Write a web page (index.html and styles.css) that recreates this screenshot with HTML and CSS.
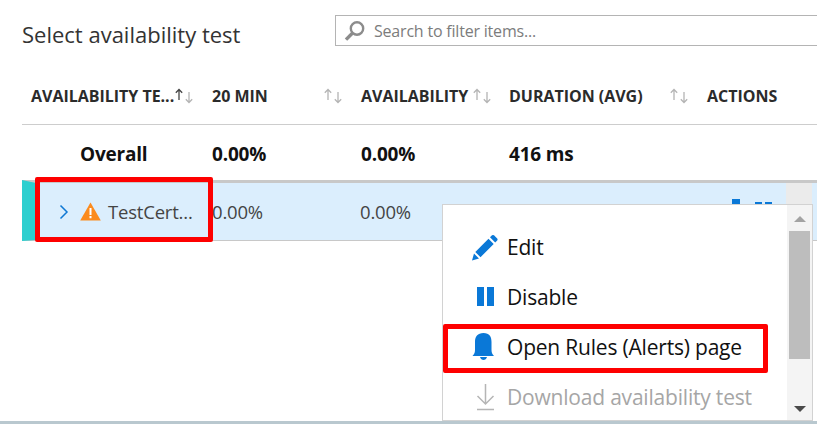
FILE: index.html
```html
<!DOCTYPE html>
<html lang="en">
<head>
<meta charset="utf-8">
<title>Select availability test</title>
<link rel="stylesheet" href="styles.css">
</head>
<body>
<main class="blade">
  <header class="top">
    <h1 class="title">Select availability test</h1>
    <div class="search">
      <svg class="search-icon" width="24" height="24" viewBox="0 0 24 24"><circle cx="14" cy="9.500" r="6.200" fill="none" stroke="#8c8c8c" stroke-width="2.400"/><path d="M9.600 14 3 20.600" stroke="#8c8c8c" stroke-width="3.400" fill="none"/></svg>
      <span>Search to filter items...</span>
    </div>
  </header>
  <div class="row head">
    <div class="cell first-h"><span class="h-text">AVAILABILITY TE...</span>
      <svg class="sort gap0" width="18" height="16" viewBox="0 0 18 16"><path d="M4 12V1.500M.8 4.700 4 1.500 7.200 4.700" fill="none" stroke="#444" stroke-width="1.300"/><path d="M14 4V14.500M10.800 11.300 14 14.500 17.200 11.300" fill="none" stroke="#b4b4b4" stroke-width="1.300"/></svg></div>
    <div class="cell"><span class="h-text">20 MIN</span>
      <svg class="sort gap1" width="18" height="16" viewBox="0 0 18 16"><path d="M4 12V1.500M.8 4.700 4 1.500 7.200 4.700" fill="none" stroke="#b4b4b4" stroke-width="1.300"/><path d="M14 4V14.500M10.800 11.300 14 14.500 17.200 11.300" fill="none" stroke="#b4b4b4" stroke-width="1.300"/></svg></div>
    <div class="cell"><span class="h-text">AVAILABILITY</span>
      <svg class="sort gap2" width="18" height="16" viewBox="0 0 18 16"><path d="M4 12V1.500M.8 4.700 4 1.500 7.200 4.700" fill="none" stroke="#b4b4b4" stroke-width="1.300"/><path d="M14 4V14.500M10.800 11.300 14 14.500 17.200 11.300" fill="none" stroke="#b4b4b4" stroke-width="1.300"/></svg></div>
    <div class="cell"><span class="h-text">DURATION (AVG)</span>
      <svg class="sort gap3" width="18" height="16" viewBox="0 0 18 16"><path d="M4 12V1.500M.8 4.700 4 1.500 7.200 4.700" fill="none" stroke="#b4b4b4" stroke-width="1.300"/><path d="M14 4V14.500M10.800 11.300 14 14.500 17.200 11.300" fill="none" stroke="#b4b4b4" stroke-width="1.300"/></svg></div>
    <div class="cell"><span class="h-text">ACTIONS</span></div>
  </div>
  <div class="row overall">
    <div class="cell overall-name">Overall</div>
    <div class="cell">0.00%</div>
    <div class="cell">0.00%</div>
    <div class="cell">416 ms</div>
    <div class="cell"></div>
  </div>
  <div class="row selected">
    <div class="cell name">
      <svg class="chev" width="10" height="16" viewBox="0 0 10 16"><path d="M1.500 1.500 8 8l-6.500 6.500" fill="none" stroke="#0f78d4" stroke-width="1.500"/></svg>
      <svg class="warn" width="21" height="19" viewBox="0 0 21 19"><path d="M10.500 0.500 20.800 18.500H0.200Z" fill="#fb8b1e"/><path d="M9.500 6h2v7h-2zM9.500 14h2v2.300h-2z" fill="#fff"/></svg>
      <span>TestCert...</span>
    </div>
    <div class="cell">0.00%</div>
    <div class="cell">0.00%</div>
    <div class="cell"></div>
    <div class="cell"></div>
  </div>
</main>

<div class="row-action-peek"></div>
<div class="scroll-back"></div>

<div class="menu">
  <ul class="items">
    <li class="item">
      <svg width="28" height="28" viewBox="0 0 28 28"><path d="M2 27.500 4 20.500 9 25.500ZM5.300 19 18.500 5.800 23.700 11 10.500 24.200ZM20 4.300 22 2.300Q23 1.500 24 2.300L27.200 5.500Q28 6.500 27.200 7.500L25.200 9.500Z" fill="#0a78d7"/></svg>
      <span>Edit</span>
    </li>
    <li class="item">
      <svg width="28" height="28" viewBox="0 0 28 28"><path d="M7 4h7v19H7zM17 4h7v19h-7z" fill="#0a78d7"/></svg>
      <span>Disable</span>
    </li>
    <li class="item">
      <svg width="28" height="28" viewBox="0 1 28 28"><path d="M13.500 1c6 0 8 3.500 8 9v8c0 3 1 4.500 2.500 6H2.500c1.500-1.500 2.500-3 2.500-6v-8c0-5.500 2.500-9 8.500-9ZM10 25h7c-.5 2-2 3-3.500 3s-3-1-3.500-3Z" fill="#0a78d7"/></svg>
      <span>Open Rules (Alerts) page</span>
    </li>
    <li class="item off">
      <svg width="28" height="28" viewBox="0 0 28 28"><path d="M15.500 1v20M7.500 13l8 8 8-8M7 26.500h17" fill="none" stroke="#b5b5b5" stroke-width="1.500"/></svg>
      <span>Download availability test</span>
    </li>
  </ul>
  <div class="bar">
    <div class="arrow up"></div>
    <div class="thumb"></div>
    <div class="arrow down"></div>
  </div>
</div>

<div class="mark mark-row"></div>
<div class="mark mark-menu"></div>
<div class="foot"></div>
</body>
</html>
```
FILE: styles.css
```css
html, body {
  margin: 0;
  padding: 0;
  background: #fff;
}
body {
  width: 817px;
  height: 424px;
  overflow: hidden;
  position: relative;
  font-family: "Open Sans", "Noto Sans", sans-serif;
  color: #262626;
}
.blade {
  padding: 15px 0 0 22px;
}
.top {
  display: flex;
  align-items: flex-start;
  height: 31px;
}
.title {
  width: 313px;
  margin: 3px 0 0;
  font-size: 22px;
  line-height: 32px;
  font-weight: 400;
  color: #333;
}
.search {
  flex: 1;
  display: flex;
  align-items: center;
  gap: 7px;
  height: 31px;
  box-sizing: border-box;
  padding-left: 7px;
  border: 1px solid #b4b4b4;
  border-right: 0;
  font-size: 16px;
  letter-spacing: -0.2px;
  color: #7c7c7c;
}
.search-icon {
  flex: none;
}
.row {
  display: grid;
  grid-template-columns: 190px 149px 148px 198px 88px;
  width: 795px;
  box-sizing: border-box;
}
.cell {
  display: flex;
  align-items: center;
  white-space: nowrap;
}
.head {
  height: 80px;
  margin-top: -1px;
  border-bottom: 1px solid #cdcdcd;
  font-size: 16px;
  font-weight: 700;
  color: #2b2b2b;
  align-items: end;
  padding-bottom: 18px;
  letter-spacing: -0.02px;
}
.first-h {
  padding-left: 9px;
}
.h-text {
  line-height: 20px;
}
.sort {
  flex: none;
}
.gap0 { margin-left: 1px; }
.gap1 { margin-left: 56px; }
.gap2 { margin-left: 5px; }
.gap3 { margin-left: 27px; }
.overall {
  height: 55px;
  padding-top: 2px;
  font-size: 19px;
  font-weight: 700;
  color: #111;
  letter-spacing: -0.2px;
}
.overall-name {
  padding-left: 58px;
}
.selected {
  height: 61px;
  border-top: 3px solid #c8c8c8;
  border-bottom: 1px solid #c8c8c8;
  border-left: 14px solid #2dcfcf;
  background: #dbeefd;
  font-size: 18.500px;
  color: #444;
  letter-spacing: -0.2px;
  grid-template-columns: 176px 148px 148px 198px 111px;
}
.name {
  padding-left: 23px;
}
.chev {
  margin-right: 11px;
}
.warn {
  margin-right: 7px;
}
.row-action-peek {
  position: absolute;
  left: 732px;
  top: 199px;
  width: 40px;
  height: 5px;
  background:
    linear-gradient(90deg, #0a78d7 0 8px, transparent 8px) 0 0 / 40px 5px no-repeat,
    linear-gradient(90deg, transparent 23px, #0a78d7 23px 30px, transparent 30px 33px, #0a78d7 33px 40px) 0 3px / 40px 2px no-repeat;
}
.scroll-back {
  position: absolute;
  left: 786px;
  top: 183px;
  width: 26px;
  height: 57px;
  background: #ebebeb;
}
.menu {
  position: absolute;
  left: 442px;
  top: 204px;
  width: 371px;
  height: 217px;
  box-sizing: border-box;
  border: 1px solid #d2d2d2;
  background: #fff;
  display: flex;
  justify-content: space-between;
}
.items {
  list-style: none;
  margin: 0;
  padding: 17px 0 0 27px;
}
.item {
  display: flex;
  align-items: center;
  gap: 9px;
  height: 50px;
  font-size: 21px;
  letter-spacing: -0.2px;
  color: #111;
}
.item svg {
  flex: none;
}
.off {
  color: #a6a6a6;
}
.bar {
  width: 25px;
  background: #f4f4f4;
  display: flex;
  flex-direction: column;
  align-items: center;
  position: relative;
}
.arrow {
  width: 0;
  height: 0;
  border-left: 6px solid transparent;
  border-right: 6px solid transparent;
}
.up {
  margin-top: 11px;
  border-bottom: 6px solid #a3a3a3;
}
.thumb {
  width: 21px;
  height: 128px;
  margin-top: 9px;
  background: #bdbdbd;
}
.down {
  position: absolute;
  bottom: 8px;
  border-top: 6px solid #4a4a4a;
}
.mark {
  position: absolute;
  box-sizing: border-box;
  border: 5px solid #fe0000;
  border-radius: 2px;
}
.mark-row {
  left: 35px;
  top: 177px;
  width: 178px;
  height: 65px;
}
.mark-menu {
  left: 443px;
  top: 324px;
  width: 325px;
  height: 49px;
}
.foot {
  position: absolute;
  left: 0;
  right: 0;
  bottom: 0;
  height: 3px;
  background: #b9c8cf;
}
```
